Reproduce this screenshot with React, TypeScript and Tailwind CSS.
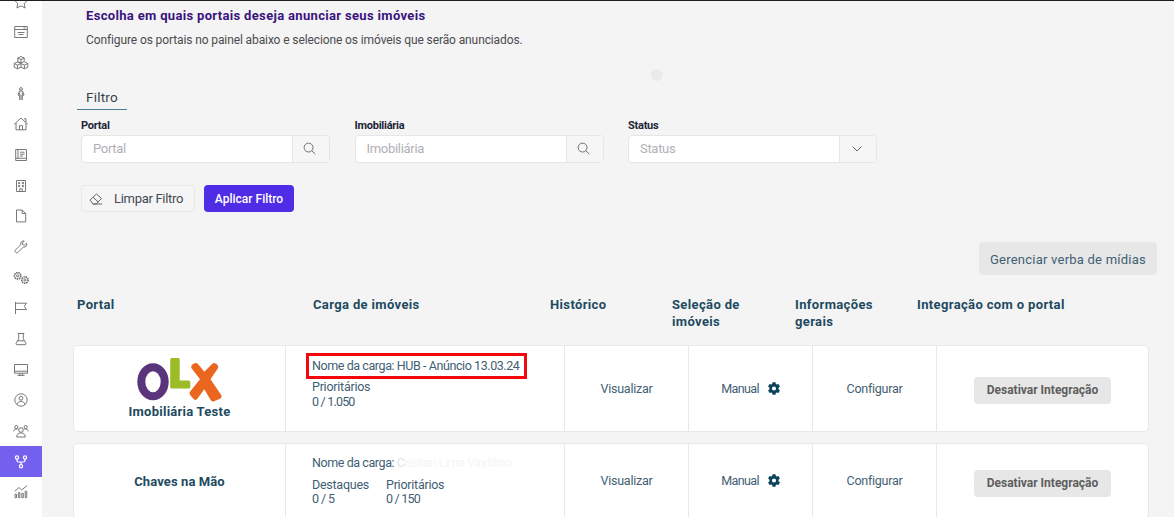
import { ReactNode } from "react";
import clsx from "clsx";

const menuIcons: { name: string; icon: ReactNode }[] = [
  {
    name: "Favoritos",
    icon: <path d="M8 1.5l2 4.2 4.5.6-3.3 3.1.9 4.6L8 11.8 3.9 14l.9-4.6L1.5 6.3 6 5.7z" />,
  },
  {
    name: "Painel",
    icon: <path d="M1.700 2.500h12.600v11H1.700zM1.700 5.500h12.600M10.500 4h2M4.500 8.500h7M5.500 10.500h5" />,
  },
  {
    name: "Produtos",
    icon: (
      <path d="M8 1.5l3.2 1.5v3.500L8 8 4.800 6.500V3zM4.800 3L8 4.500 11.200 3M8 4.500V8M4.600 7l3.400 1.500v3.700l-3.400 1.600-3.400-1.600V8.500zM1.200 8.600l3.400 1.500L8 8.600M4.600 10.100v3.600M11.400 7l3.400 1.500v3.700l-3.400 1.600L8 12.200M8 8.600l3.400 1.500 3.400-1.500M11.400 10.100v3.600" />
    ),
  },
  {
    name: "Pessoas",
    icon: (
      <>
        <circle cx="8" cy="3" r="1.400" />
        <path d="M6.700 14V9.800L4.900 9l1.600-4h3l1.600 4-1.800.8V14M8 9v5M6.700 6.500v3.300M9.300 6.500v3.300" />
      </>
    ),
  },
  {
    name: "Imóveis",
    icon: <path d="M1.200 8.300L8 2l6.800 6.300M3 7v6.800h10V7M6.500 13.800V9.700h3v4.100M11 2.800h2v3.500" />,
  },
  {
    name: "Cadastros",
    icon: <path d="M2.700 2.500h10.800v8.800H2.700zM2.700 11.300v2.200h10.800v-2.200M5 2.500v8.800M7 5.200h4.500M7 7.200h4.500M7 9.100h2.800" />,
  },
  {
    name: "Empreendimentos",
    icon: (
      <path d="M3.500 2.500h9v11h-9zM5.500 4.500h1.200v1.200H5.500zM9.300 4.500h1.200v1.200H9.300zM5.500 7.500h1.200v1.200H5.500zM9.300 7.500h1.200v1.200H9.300zM6.700 13.300v-2.500h2.600v2.500" />
    ),
  },
  {
    name: "Documentos",
    icon: <path d="M3.500 2h5.700l3.500 3.500v8.400H3.500zM9.200 2v3.500h3.500" />,
  },
  {
    name: "Ferramentas",
    icon: (
      <path d="M13.400 4.200l-2 1.900-1.700-.5-.4-1.600 2-2C9.400 1.500 7.300 3 7.800 5.700L2.600 10.900c-1.500 1.600.7 3.900 2.400 2.400l5.300-5.200c2.400.4 4-1.600 3.100-3.900z" />
    ),
  },
  {
    name: "Configurações",
    icon: (
      <>
        <circle cx="4.600" cy="5.800" r="3.200" strokeDasharray="1.500 .7" strokeWidth="1.600" />
        <circle cx="4.600" cy="5.800" r="1.100" />
        <circle cx="11.900" cy="10" r="3.200" strokeDasharray="1.500 .7" strokeWidth="1.600" />
        <circle cx="11.900" cy="10" r="1.100" />
      </>
    ),
  },
  {
    name: "Metas",
    icon: <path d="M2.500 2v12M2.500 3.200h11l-2.200 3.100 2.200 3.200h-11" />,
  },
  {
    name: "Laboratório",
    icon: <path d="M4.700 2.500h6.600M5.700 2.500v5.300l-2.500 4.200c-.5.8-.2 1.700.8 1.700h8c1 0 1.300-.9.800-1.700l-2.500-4.200V2.500M4.600 9.800h6.800" />,
  },
  {
    name: "Site",
    icon: <path d="M1.500 2.500h13v8.700h-13zM1.500 9.200h13M6.700 11.200v2M9.300 11.200v2M4.500 13.400h7" />,
  },
  {
    name: "Perfil",
    icon: (
      <>
        <circle cx="8" cy="8" r="6.200" />
        <circle cx="8" cy="6.300" r="1.900" />
        <path d="M4.200 12.500c.4-4.200 7.200-4.200 7.600 0" />
      </>
    ),
  },
  {
    name: "Equipe",
    icon: (
      <>
        <circle cx="3.300" cy="4" r="1.600" />
        <circle cx="12.700" cy="4" r="1.600" />
        <circle cx="8" cy="7" r="2.300" />
        <path d="M3.700 14c0-5.500 8.600-5.500 8.600 0zM.8 8.400c0-1.900 1.200-2.800 3.900-2.400M15.200 8.400c0-1.900-1.200-2.800-3.900-2.400" />
      </>
    ),
  },
  {
    name: "Integrações",
    icon: (
      <>
        <circle cx="4" cy="3.500" r="1.600" />
        <circle cx="12" cy="3.500" r="1.600" />
        <circle cx="8" cy="12.300" r="1.600" />
        <path d="M4 5.100v1.400c0 1 .5 1.500 1.500 1.500h5c1 0 1.500-.5 1.500-1.500V5.100M8 8v2.700" />
      </>
    ),
  },
  {
    name: "Relatórios",
    icon: (
      <path d="M1.800 7.200l4.200-3.700 2.600 2.500L14 1.800M2 10.200v3.500h1.500v-3.500zM5.400 8.700v5h1.500v-5zM8.800 9.400v4.300h1.500V9.400zM12.200 7.200v6.500h1.500V7.200z" />
    ),
  },
];

function Sidebar() {
  return (
    <nav className="w-[42px] shrink-0 overflow-hidden bg-white">
      <ul className="-mt-[15px]">
        {menuIcons.map(({ name, icon }) => {
          const active = name === "Integrações";
          return (
            <li
              key={name}
              aria-label={name}
              className={clsx(
                "flex h-[30.67px] items-center justify-center pt-[1px]",
                active ? "bg-[#7460ee] text-white" : "text-[#69696e]"
              )}
            >
              <svg
                viewBox="0 0 16 16"
                className="size-[16px]"
                fill="none"
                stroke="currentColor"
                strokeWidth={active ? 1.2 : 0.9}
              >
                {icon}
              </svg>
            </li>
          );
        })}
      </ul>
    </nav>
  );
}

interface FieldProps {
  label: string;
  children: ReactNode;
}

function Field({ label, children }: FieldProps) {
  return (
    <div className="w-[249px]">
      <label className="block h-[17px] text-[11px] leading-[16px] font-bold tracking-[-0.25px] text-[#1d2536]">
        {label}
      </label>
      <div className="flex h-[28px] overflow-hidden rounded-[4px] border border-[#e6e6e6] bg-white">
        <input
          placeholder={label}
          className="w-[211px] border-r border-[#e6e6e6] px-[11px] text-[13px] tracking-[-0.3px] outline-none placeholder:text-[#b0b0b6]"
        />
        <button className="flex flex-1 items-center justify-center bg-[#f6f6f6] pr-[3px] pb-[1px] text-[#666]">
          {children}
        </button>
      </div>
    </div>
  );
}

function SearchIcon() {
  return (
    <svg viewBox="0 0 14 14" className="size-[13px]" fill="none" stroke="currentColor">
      <circle cx="6" cy="6" r="4.800" />
      <path d="M9.500 9.500l3.700 3.500" />
    </svg>
  );
}

function OlxLogo() {
  return (
    <svg viewBox="0 0 86 46" className="-mt-[1px] mb-[1px] h-[46px] w-[86px]" fill="none">
      <ellipse cx="16" cy="25.800" rx="11.700" ry="14.500" stroke="#5b357c" strokeWidth="8" />
      <path
        d="M33.200 4.500c0-2 .5-2.500 2-2.500h5.500c1.300 0 2 .5 2 2v20.500h8.300c1.500 0 2.300.5 2.300 2v4.500c0 1-.5 1.500-2 1.500H35.200c-1.500 0-2-.5-2-2z"
        fill="#9bbc26"
      />
      <path
        d="M55.800 8.300c1.500-1.500 3.500-2 5-.5l6.500 8 8-8c1.500-1.500 3-1 4.500.5s2 3 .8 4.500L73.500 23.300 84 38.800c1 1.500.7 3-1 4l-6 2.500c-1.500.5-2.500 0-3.500-1.500l-6.200-10.500-7 9.500c-1.300 1.600-2.500 1.500-4 0l-3-3.500c-1-1.200-1-2.500 0-4L63 23.300l-8.500-11c-1-1.500.2-3 1.300-4z"
        fill="#ea661f"
      />
    </svg>
  );
}

function GearIcon() {
  return (
    <svg viewBox="60 0 392 512" className="mb-[2px] h-[13px] w-[12px]" fill="currentColor">
      <path
        fillRule="evenodd"
        d="M198 8h116l14 71 34 20 69-24 58 100-55 48v66l55 48-58 100-69-24-34 20-14 71H198l-14-71-34-20-69 24-58-100 55-48v-66l-55-48L81 75l69 24 34-20zM256 174a82 82 0 1 0 0 164 82 82 0 0 0 0-164z"
      />
    </svg>
  );
}

interface PortalRowProps {
  name: string;
  logo?: ReactNode;
  height: string;
  children: ReactNode;
}

function PortalRow({ name, logo, height, children }: PortalRowProps) {
  return (
    <div
      className={clsx(
        "grid w-[1076px] grid-cols-[212px_279px_124px_124px_124px_1fr] divide-x divide-[#e8e8e8] rounded-[5px] border border-[#e8e8e8] bg-white text-[12.500px] tracking-[-0.25px] text-[#3f6073]",
        height
      )}
    >
      <div
        className={clsx(
          "flex flex-col items-center justify-center text-[13px] font-bold text-[#1d4a60]",
          logo ? "tracking-[0.25px]" : "pt-[2px] tracking-[0.1px]"
        )}
      >
        {logo}
        <span className="leading-[18px]">{name}</span>
      </div>
      <div>{children}</div>
      <div className="flex items-center justify-center pt-[1px]">
        <span>Visualizar</span>
      </div>
      <div className="flex items-center justify-center gap-[9px] pt-[1px]">
        <span className="tracking-[-0.6px]">Manual</span>
        <span className="text-[#0a435c]">
          <GearIcon />
        </span>
      </div>
      <div className="flex items-center justify-center pt-[1px]">
        <span>Configurar</span>
      </div>
      <div className="flex items-center justify-center pt-1">
        <button className="h-[27px] w-[137px] rounded-[4px] bg-[#e7e7e7] pb-[1px] text-[12px] font-bold tracking-[0px] text-[#5e5e5e]">
          Desativar Integração
        </button>
      </div>
    </div>
  );
}

export default function App() {
  return (
    <div className="flex h-[517px] w-[1174px] overflow-hidden border-t border-[#211c24] bg-[#f4f4f4] font-[Roboto,sans-serif]">
      <Sidebar />
      <main className="relative flex-1">
        <header className="pt-[6px] pl-[44px]">
          <h1 className="text-[13px] leading-[18px] font-bold tracking-[0.33px] text-[#3a137e]">
            Escolha em quais portais deseja anunciar seus imóveis
          </h1>
          <p className="mt-[7px] text-[12px] leading-[16px] tracking-[-0.11px] text-[#4b4b4f]">
            Configure os portais no painel abaixo e selecione os imóveis que serão anunciados.
          </p>
        </header>
        <div className="absolute top-[68px] left-[609px] size-[12px] rounded-full bg-[#eaeaea]" />

        <section className="mt-[39px] pl-[39px]">
          <div className="-ml-1 h-[23px] w-[50px] border-b border-[#4b7f91] text-center text-[13.500px] leading-[20px] tracking-[0.2px] text-[#35434e]">
            Filtro
          </div>
          <div className="mt-[8px] flex gap-[24.500px]">
            <Field label="Portal">
              <SearchIcon />
            </Field>
            <Field label="Imobiliária">
              <SearchIcon />
            </Field>
            <Field label="Status">
              <svg viewBox="0 0 12 8" className="h-[8px] w-[12px]" fill="none" stroke="currentColor">
                <path d="M1.500 1.500L6 6l4.500-4.500" />
              </svg>
            </Field>
          </div>
          <div className="mt-[22px] flex gap-[9px]">
            <button className="flex h-[27px] w-[114px] items-center gap-[11px] rounded-[4px] border border-[#e8e8e8] bg-[#f5f5f5] pl-[7px] text-[13px] tracking-[-0.3px] text-[#3f4a54]">
              <svg viewBox="0 0 14 12" className="h-[12px] w-[14px]" fill="none" stroke="#666">
                <path d="M1 7L7.500 1l5 4.500L7 11H4zM4 4.300l5.300 4.700M4 11h9" />
              </svg>
              <span>Limpar Filtro</span>
            </button>
            <button className="h-[27px] w-[90px] rounded-[4px] bg-[#4f2ce6] text-[12px] font-medium text-white">
              Aplicar Filtro
            </button>
          </div>
        </section>

        <div className="mt-[30px] flex justify-end pr-[17px]">
          <button className="h-[33px] w-[178px] rounded-[4px] bg-[#e7e7e7] pt-[2px] text-[13px] tracking-[0.23px] text-[#3f6073]">
            Gerenciar verba de mídias
          </button>
        </div>

        <section className="pl-[31px]">
          <div className="grid h-[70px] grid-cols-[236px_237px_122px_123px_122px_1fr] pt-[21px] pl-[4px] text-[13px] leading-[17px] font-bold tracking-[0.36px] text-[#1d4a60]">
            <span>Portal</span>
            <span>Carga de imóveis</span>
            <span>Histórico</span>
            <span>
              Seleção de
              <br />
              imóveis
            </span>
            <span>
              Informações
              <br />
              gerais
            </span>
            <span>Integração com o portal</span>
          </div>
          <div className="flex flex-col gap-[11px]">
            <PortalRow name="Imobiliária Teste" logo={<OlxLogo />} height="h-[87px]">
              <div className="mt-[7px] ml-[20px] flex h-[26px] w-[221px] items-center border-[3px] border-[#f4070c] pl-[3px] tracking-[-0.42px] whitespace-nowrap">
                Nome da carga: HUB - Anúncio 13.03.24
              </div>
              <div className="ml-[26px] leading-[15px]">
                <p>Prioritários</p>
                <p className="tracking-[-0.8px]">0 / 1.050</p>
              </div>
            </PortalRow>
            <PortalRow name="Chaves na Mão" height="h-[76px]">
              <p className="mt-[10px] ml-[26px] leading-[18px] tracking-[-0.42px] whitespace-nowrap">
                Nome da carga:{" "}
                <span className="text-[#f5f5f6]">
                  <span className="text-[#e2e4e6]">C</span>ristian Lima Vindilino
                </span>
              </p>
              <div className="mt-[6px] ml-[26px] flex leading-[14px]">
                <div className="w-[74px]">
                  <p>Destaques</p>
                  <p className="tracking-[-0.6px]">0 / 5</p>
                </div>
                <div>
                  <p>Prioritários</p>
                  <p className="tracking-[-0.8px]">0 / 150</p>
                </div>
              </div>
            </PortalRow>
          </div>
        </section>
      </main>
    </div>
  );
}
